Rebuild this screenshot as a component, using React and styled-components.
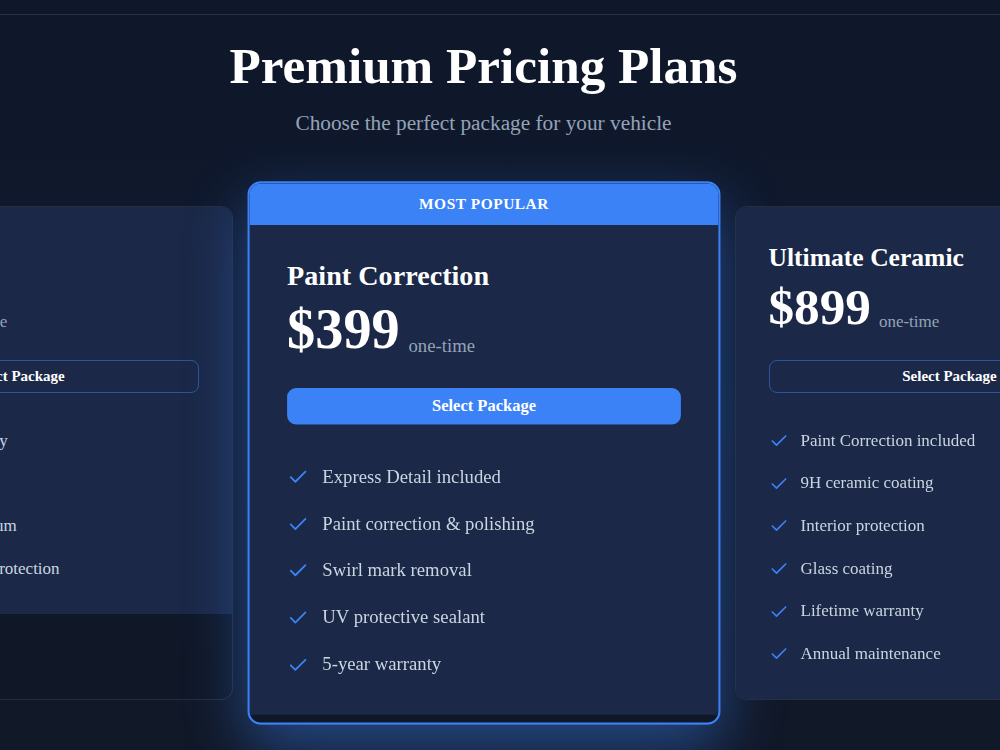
import React from "react";
import styled, { createGlobalStyle } from "styled-components";
import { Check } from "lucide-react";

const GlobalStyle = createGlobalStyle`
  html, body {
    margin: 0;
    padding: 0;
    background: #0f172a;
    overflow: hidden;
  }
  body {
    font-family: "Liberation Serif", "Times New Roman", serif;
  }
  * { box-sizing: border-box; }
`;

const Page = styled.div`
  width: 100%;
  height: 750px;
  overflow: hidden;
  background: linear-gradient(180deg, #0f172a 0%, #101a2e 55%, #111827 100%);
`;

const TopRule = styled.div`
  height: 15px;
  border-bottom: 1px solid rgba(148, 163, 184, 0.2);
`;

const Section = styled.section`
  width: 967px;
`;

const Heading = styled.h1`
  margin: 20px 0 0;
  font-size: 51.2px;
  line-height: 1.2;
  font-weight: 700;
  color: #ffffff;
  text-align: center;
`;

const Subheading = styled.p`
  margin: 15px 0 0;
  font-size: 21.3px;
  line-height: 1.2;
  color: #94a3b8;
  text-align: center;
`;

const PlanRow = styled.div`
  margin-top: 69px;
  display: flex;
  justify-content: center;
  align-items: stretch;
  gap: 36px;
`;

/* every card is positioned, so later cards paint over the featured card's glow */
const Card = styled.article`
  position: relative;
  flex: 0 0 430px;
  width: 430px;
  display: flex;
  flex-direction: column;
  border-radius: 12px;
  overflow: hidden;
  background: rgba(17, 24, 39, 0.55);
  border: ${(p) => (p.$featured ? "2px solid #3b82f6" : "1px solid rgba(148, 163, 184, 0.16)")};
  ${(p) =>
    p.$featured &&
    `
    transform: scale(1.1);
    box-shadow: 0 22px 55px rgba(59, 130, 246, 0.45);
  `}
`;

const Ribbon = styled.div`
  height: 38px;
  display: flex;
  align-items: center;
  justify-content: center;
  background: #3b82f6;
  color: #ffffff;
  font-size: 14px;
  font-weight: 700;
  letter-spacing: 0.5px;
  text-transform: uppercase;
`;

const CardBody = styled.div`
  background: #1b2847;
  padding: ${(p) => (p.$featured ? "31px 34px 24px" : "36px 33px 24px")};
`;

const PlanName = styled.h3`
  margin: 0 0 7px;
  font-size: 25.6px;
  line-height: 1.2;
  font-weight: 700;
  color: #ffffff;
`;

const PriceRow = styled.div`
  display: flex;
  align-items: flex-end;
  gap: 8px;
`;

const Amount = styled.span`
  font-size: 51.2px;
  line-height: 1;
  font-weight: 700;
  color: #ffffff;
`;

const Period = styled.span`
  font-size: 17px;
  color: #94a3b8;
`;

const SelectButton = styled.button`
  display: block;
  width: 100%;
  margin-top: 28px;
  height: 33px;
  border-radius: 8px;
  font-family: "Liberation Serif", "Times New Roman", serif;
  font-size: 15px;
  font-weight: 700;
  color: #ffffff;
  cursor: pointer;
  background: ${(p) => (p.$primary ? "#3b82f6" : "transparent")};
  border: ${(p) => (p.$primary ? "none" : "1px solid rgba(59, 130, 246, 0.5)")};
`;

const FeatureList = styled.ul`
  list-style: none;
  margin: 27px 0 0;
  padding: 0;
`;

const Feature = styled.li`
  display: flex;
  align-items: center;
  gap: 12px;
  padding: 8px 0;
  font-size: 17px;
  line-height: 26.6px;
  color: #cbd5e1;

  svg {
    flex-shrink: 0;
    color: #3b82f6;
  }
`;

const plans = [
  {
    name: "Express Detail",
    price: "$149",
    features: [
      "Exterior wash & dry",
      "Window cleaning",
      "Deep interior vacuum",
      "Tire shine & trim protection",
    ],
  },
  {
    name: "Paint Correction",
    price: "$399",
    featured: true,
    features: [
      "Express Detail included",
      "Paint correction & polishing",
      "Swirl mark removal",
      "UV protective sealant",
      "5-year warranty",
    ],
  },
  {
    name: "Ultimate Ceramic",
    price: "$899",
    features: [
      "Paint Correction included",
      "9H ceramic coating",
      "Interior protection",
      "Glass coating",
      "Lifetime warranty",
      "Annual maintenance",
    ],
  },
];

function PlanCard({ plan }) {
  return (
    <Card $featured={plan.featured}>
      {plan.featured && <Ribbon>Most Popular</Ribbon>}
      <CardBody $featured={plan.featured}>
        <PlanName>{plan.name}</PlanName>
        <PriceRow>
          <Amount>{plan.price}</Amount>
          <Period>one-time</Period>
        </PriceRow>
        <SelectButton $primary={plan.featured}>Select Package</SelectButton>
        <FeatureList>
          {plan.features.map((f) => (
            <Feature key={f}>
              <Check size={20} strokeWidth={2} />
              {f}
            </Feature>
          ))}
        </FeatureList>
      </CardBody>
    </Card>
  );
}

export default function App() {
  return (
    <Page>
      <GlobalStyle />
      <TopRule />
      <Section>
        <Heading>Premium Pricing Plans</Heading>
        <Subheading>Choose the perfect package for your vehicle</Subheading>
        <PlanRow>
          {plans.map((p) => (
            <PlanCard key={p.name} plan={p} />
          ))}
        </PlanRow>
      </Section>
    </Page>
  );
}
